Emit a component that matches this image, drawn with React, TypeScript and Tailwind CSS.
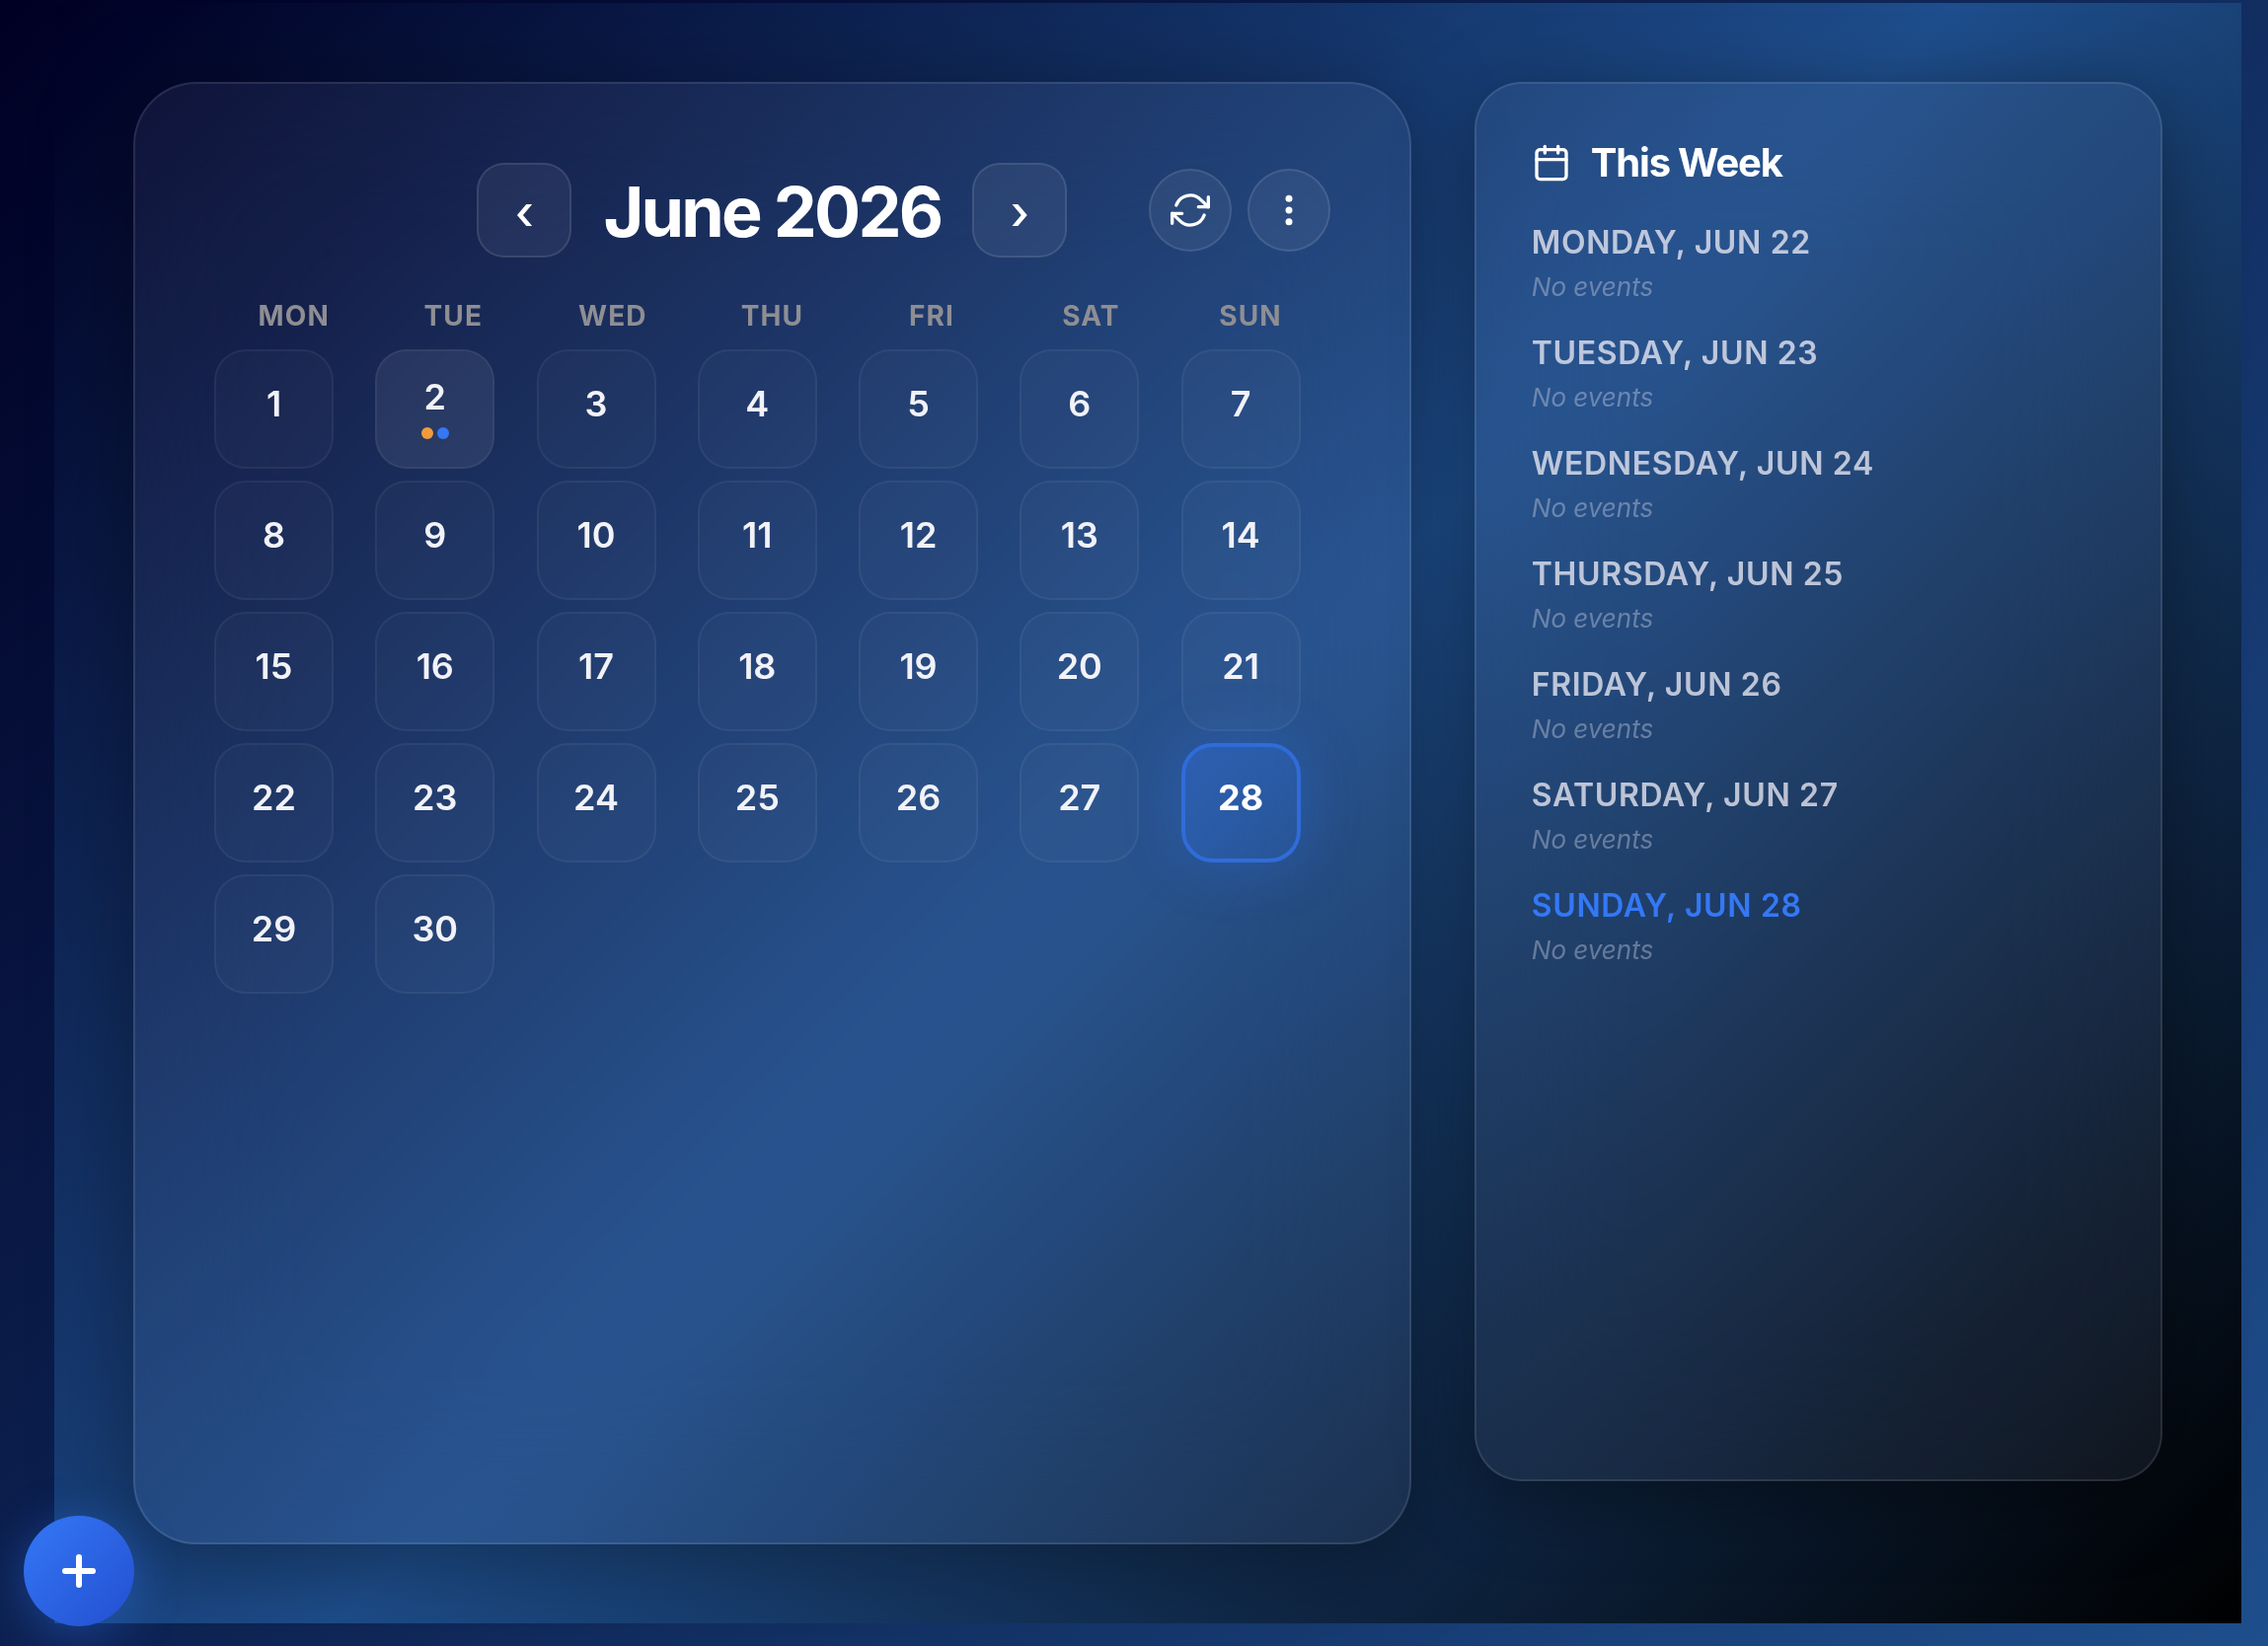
import React, { useState } from 'react';
import { Calendar, Plus } from 'lucide-react';
import { FiRefreshCw } from 'react-icons/fi';

const WEEKDAYS = ['Mon', 'Tue', 'Wed', 'Thu', 'Fri', 'Sat', 'Sun'];
const DAYS = Array.from({ length: 30 }, (_, i) => i + 1);
const TODAY = 28;

// day of month -> dot colours
const EVENTS: Record<number, string[]> = {
    2: ['bg-[#f29b38]', 'bg-[#3478f6]'],
};

const WEEK = [
    { day: 22, label: 'Monday, Jun 22' },
    { day: 23, label: 'Tuesday, Jun 23' },
    { day: 24, label: 'Wednesday, Jun 24' },
    { day: 25, label: 'Thursday, Jun 25' },
    { day: 26, label: 'Friday, Jun 26' },
    { day: 27, label: 'Saturday, Jun 27' },
    { day: 28, label: 'Sunday, Jun 28' },
];

const navButton =
    'flex size-24 items-center justify-center rounded-[28px] border-2 border-white/10 bg-white/[0.06] pt-1 text-[48px] leading-none font-medium';
const roundButton =
    'flex size-21 items-center justify-center rounded-full border-2 border-white/10 bg-white/[0.06]';

function DayCell({ day, selected, onSelect }: { day: number; selected: boolean; onSelect: () => void }) {
    const dots = EVENTS[day];

    let look = 'border-2 border-white/[0.05] bg-white/[0.025] pb-3 font-semibold text-[#f2f2f7]';
    if (dots) {
        look = 'border-2 border-white/[0.06] bg-white/[0.07] pb-1 font-semibold text-[#f2f2f7]';
    }
    if (selected) {
        look = 'border-4 border-[#306cd9] bg-linear-135/srgb from-[#3478f6]/35 to-[#3478f6]/15 pb-3 font-bold text-white shadow-[0_0_60px_rgba(52,120,246,0.3)]';
    }

    return (
        <button
            type="button"
            onClick={onSelect}
            className={`flex aspect-square w-4/5 flex-col items-center justify-center rounded-[32px] text-[36px] leading-[44px] ${look}`}
        >
            <span>{day}</span>
            {dots && (
                <span className="mt-[9px] flex gap-1">
                    {dots.map((color) => (
                        <span key={color} className={`size-3 rounded-full ${color}`} />
                    ))}
                </span>
            )}
        </button>
    );
}

export default function App() {
    const [selected, setSelected] = useState(TODAY);

    return (
        <div className="flex min-h-screen bg-linear-135/srgb from-[#000024] to-[#1e4e8c] pt-[3px] pr-[27px] pb-[23px] pl-[55px] font-['Inter',sans-serif] text-white">
            <main className="grid flex-1 grid-cols-[65fr_35fr] gap-16 bg-linear-135/srgb from-[#000024] via-[#1e4e8c] to-black p-20">

                {/* Month */}
                <section className="rounded-[64px] border-2 border-white/[0.1] bg-[#fff5ff]/[0.05] p-20 shadow-[0_16px_100px_rgba(0,0,0,0.4)] backdrop-blur-[80px]">
                    <header className="grid grid-cols-[1fr_auto_1fr] items-center">
                        <div className="col-start-2 flex items-center gap-8">
                            <button type="button" aria-label="Previous month" className={navButton}>‹</button>
                            <h1 className="pt-1 text-[70px] leading-[84px] font-bold tracking-[-0.04em]">June 2026</h1>
                            <button type="button" aria-label="Next month" className={navButton}>›</button>
                        </div>
                        <div className="flex justify-end gap-4">
                            <button type="button" aria-label="Refresh" className={roundButton}>
                                <FiRefreshCw className="size-10" />
                            </button>
                            <button type="button" aria-label="More options" className={roundButton}>
                                <svg className="size-10" viewBox="0 0 24 24" fill="currentColor">
                                    <circle cx="12" cy="5" r="2.1" />
                                    <circle cx="12" cy="12" r="2.1" />
                                    <circle cx="12" cy="19" r="2.1" />
                                </svg>
                            </button>
                        </div>
                    </header>

                    <div className="mt-10 mb-4 grid grid-cols-7 pt-px text-center text-[28px] leading-9 font-bold tracking-[0.04em] text-[#8e8e93] uppercase">
                        {WEEKDAYS.map((name) => (
                            <div key={name}>{name}</div>
                        ))}
                    </div>

                    <div className="grid grid-cols-7 gap-3">
                        {DAYS.map((day) => (
                            <DayCell
                                key={day}
                                day={day}
                                selected={day === selected}
                                onSelect={() => setSelected(day)}
                            />
                        ))}
                    </div>
                </section>

                {/* Week list */}
                <aside className="mb-16 rounded-[48px] border-2 border-white/[0.1] bg-[#fff5ff]/[0.05] p-14 shadow-[0_16px_80px_rgba(0,0,0,0.4)] backdrop-blur-[80px]">
                    <h2 className="mb-9 flex items-center gap-5 text-[40px] leading-[48px] font-bold tracking-[-0.03em]">
                        <Calendar className="size-10" />
                        This Week
                    </h2>
                    <ul className="flex flex-col gap-[30px]">
                        {WEEK.map(({ day, label }) => (
                            <li key={day}>
                                <h3
                                    className={`text-[32px] leading-[42px] font-semibold tracking-[0.02em] uppercase ${day === TODAY ? 'text-[#3478f6]' : 'text-[#ebebf5]/77'}`}
                                >
                                    {label}
                                </h3>
                                <p className="mt-2 text-[26px] leading-8 text-[#ebebf5]/35 italic">No events</p>
                            </li>
                        ))}
                    </ul>
                </aside>
            </main>

            <button
                type="button"
                aria-label="Add event"
                className="fixed bottom-5 left-6 flex size-28 items-center justify-center rounded-full bg-linear-135/srgb from-[#3478f6] to-[#234fd0] shadow-[0_8px_48px_rgba(52,120,246,0.4)]"
            >
                <Plus className="size-12" strokeWidth={3} />
            </button>
        </div>
    );
}
